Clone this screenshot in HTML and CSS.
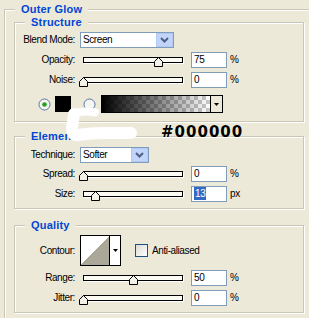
FILE: index.html
```html
<!DOCTYPE html>
<html>
<head>
<meta charset="utf-8">
<title>Outer Glow</title>
<link rel="stylesheet" href="styles.css">
</head>
<body>
<fieldset class="group outer">
  <legend class="title title-outer">Outer Glow</legend>

  <fieldset class="group section structure">
    <legend class="title">Structure</legend>
    <div class="row row-blend">
      <span class="label">Blend Mode:</span>
      <div class="select select-wide">
        <span class="select-value">Screen</span>
        <span class="select-btn"><svg width="17" height="14" viewBox="0 0 17 14"><path d="M5 5 L8.5 8.5 L12 5" fill="none" stroke="#4d6185" stroke-width="2"/></svg></span>
      </div>
    </div>
    <div class="row row-gap">
      <span class="label">Opacity:</span>
      <div class="slider"><div class="track"></div><svg class="thumb" style="left:75%" width="9" height="10" viewBox="0 0 9 10"><polygon points="4.5,0.5 8.5,4.5 8.5,9.5 0.5,9.5 0.5,4.5" fill="#f4f2e8" stroke="#000"/></svg></div>
      <div class="field">75</div><span class="unit">%</span>
    </div>
    <div class="row row-gap-lg">
      <span class="label">Noise:</span>
      <div class="slider"><div class="track"></div><svg class="thumb" style="left:0%" width="9" height="10" viewBox="0 0 9 10"><polygon points="4.5,0.5 8.5,4.5 8.5,9.5 0.5,9.5 0.5,4.5" fill="#f4f2e8" stroke="#000"/></svg></div>
      <div class="field">0</div><span class="unit">%</span>
    </div>
    <div class="color-row">
      <svg class="radio" width="13" height="13" viewBox="0 0 13 13"><circle cx="6.5" cy="6.5" r="5.5" fill="#f6f5ef" stroke="#5676a6"/><circle cx="6.5" cy="6.5" r="2.3" fill="#21a121"/></svg>
      <div class="swatch"></div>
      <svg class="radio radio-2" width="13" height="13" viewBox="0 0 13 13"><circle cx="6.5" cy="6.5" r="5.5" fill="#f6f5ef" stroke="#5676a6"/></svg>
      <div class="gradient">
        <div class="gradient-fill"></div>
        <div class="drop"><svg width="5" height="3" viewBox="0 0 5 3"><polygon points="0,0 5,0 2.5,3" fill="#000"/></svg></div>
      </div>
    </div>
  </fieldset>

  <fieldset class="group section elements">
    <legend class="title">Elements</legend>
    <div class="row row-tech">
      <span class="label">Technique:</span>
      <div class="select select-narrow">
        <span class="select-value">Softer</span>
        <span class="select-btn"><svg width="17" height="14" viewBox="0 0 17 14"><path d="M5 5 L8.5 8.5 L12 5" fill="none" stroke="#4d6185" stroke-width="2"/></svg></span>
      </div>
    </div>
    <div class="row row-gap">
      <span class="label">Spread:</span>
      <div class="slider"><div class="track"></div><svg class="thumb" style="left:0%" width="9" height="10" viewBox="0 0 9 10"><polygon points="4.5,0.5 8.5,4.5 8.5,9.5 0.5,9.5 0.5,4.5" fill="#f4f2e8" stroke="#000"/></svg></div>
      <div class="field">0</div><span class="unit">%</span>
    </div>
    <div class="row">
      <span class="label">Size:</span>
      <div class="slider"><div class="track"></div><svg class="thumb" style="left:11.5%" width="9" height="10" viewBox="0 0 9 10"><polygon points="4.5,0.5 8.5,4.5 8.5,9.5 0.5,9.5 0.5,4.5" fill="#f4f2e8" stroke="#000"/></svg></div>
      <div class="field"><span class="selected">13</span></div><span class="unit">px</span>
    </div>
  </fieldset>

  <fieldset class="group section quality">
    <legend class="title">Quality</legend>
    <div class="row row-contour">
      <span class="label">Contour:</span>
      <div class="contour">
        <div class="contour-preview"></div>
        <div class="contour-drop"><svg width="5" height="3" viewBox="0 0 5 3"><polygon points="0,0 5,0 2.5,3" fill="#000"/></svg></div>
      </div>
      <span class="checkbox"></span>
      <span class="check-label">Anti-aliased</span>
    </div>
    <div class="row row-gap">
      <span class="label">Range:</span>
      <div class="slider"><div class="track"></div><svg class="thumb" style="left:50%" width="9" height="10" viewBox="0 0 9 10"><polygon points="4.5,0.5 8.5,4.5 8.5,9.5 0.5,9.5 0.5,4.5" fill="#f4f2e8" stroke="#000"/></svg></div>
      <div class="field">50</div><span class="unit">%</span>
    </div>
    <div class="row">
      <span class="label">Jitter:</span>
      <div class="slider"><div class="track"></div><svg class="thumb" style="left:0%" width="9" height="10" viewBox="0 0 9 10"><polygon points="4.5,0.5 8.5,4.5 8.5,9.5 0.5,9.5 0.5,4.5" fill="#f4f2e8" stroke="#000"/></svg></div>
      <div class="field">0</div><span class="unit">%</span>
    </div>
  </fieldset>
</fieldset>

<svg class="scribble" width="309" height="318" viewBox="0 0 309 318">
  <path d="M95 112.5 Q 82 110 74 114" fill="none" stroke="#fff" stroke-width="8" stroke-linecap="round" stroke-linejoin="round"/>
  <path d="M74 114 L 72 128 Q 72 136 78 135 Q 90 133 104 133 L 131 133" fill="none" stroke="#fff" stroke-width="12" stroke-linecap="round" stroke-linejoin="round"/>
</svg>
<div class="note">#000000</div>
</body>
</html>
```

FILE: styles.css
```css
* {
  box-sizing: border-box;
}

html,
body {
  margin: 0;
  padding: 0;
  overflow: hidden;
}

body {
  position: relative;
  width: 309px;
  height: 318px;
  background: #ece9d8;
  color: #000;
  font-family: "Liberation Sans", Arial, sans-serif;
  font-size: 10px;
  line-height: 12px;
  letter-spacing: -0.4px;
}

.group {
  margin: 0;
  padding: 0;
  min-width: 0;
  border: 1px solid #c9c6b6;
  box-shadow: inset 1px 1px 0 #fff, 1px 1px 0 #fff;
}

.title {
  margin-left: 10px;
  padding: 0 6px;
  background: #ece9d8;
  color: #0046d5;
  font-family: "Liberation Sans", Arial, sans-serif;
  font-weight: bold;
  font-size: 11px;
  line-height: 13px;
  letter-spacing: 0.2px;
}

.outer {
  margin: 3px 0 0 4px;
  width: 305px;
  padding: 0 0 6px 9px;
  border-right: none;
  border-bottom: none;
  box-shadow: inset 1px 1px 0 #fff;
}

.title-outer {
  margin-left: 1px;
}

.section {
  width: 290px;
}

.structure {
  padding: 3px 0 8px;
}

.elements {
  margin-top: 8px;
  padding: 4px 0 6px;
}

.quality {
  margin-top: 10px;
  padding: 3px 0 6px;
}

.row {
  display: flex;
  align-items: center;
  height: 16px;
}

.row-blend {
  margin-bottom: 4px;
}

.row-gap {
  margin-bottom: 4px;
}

.row-gap-lg {
  margin-bottom: 7px;
}

.row-tech {
  margin-bottom: 3px;
}

.row-contour {
  height: 31px;
  margin-bottom: 4px;
}

.label {
  flex: none;
  width: 60px;
  margin-right: 5px;
  text-align: right;
  white-space: nowrap;
}

.select {
  display: flex;
  height: 16px;
  border: 1px solid #7f9db9;
  background: #fff;
}

.select-wide {
  width: 94px;
}

.select-narrow {
  width: 69px;
}

.select-value {
  flex: 1;
  padding-left: 2px;
  line-height: 14px;
}

.select-btn {
  display: block;
  width: 17px;
  height: 14px;
  background: #c3d4fb;
  box-shadow: inset 0 0 0 1px #b4c8f4;
}

.select-btn svg {
  display: block;
}

.slider {
  position: relative;
  flex: none;
  width: 100px;
  height: 16px;
  margin-left: 3px;
}

.track {
  margin-top: 5px;
  height: 6px;
  border: 1px solid #000;
  background: #fbfbf3;
  box-shadow: 1px 1px 0 #fff;
}

.thumb {
  position: absolute;
  top: 5px;
  margin-left: -4px;
  display: block;
}

.field {
  flex: none;
  width: 36px;
  height: 16px;
  margin-left: 8px;
  padding-left: 2px;
  border: 1px solid #7f9db9;
  background: #fff;
  line-height: 14px;
}

.selected {
  display: inline-block;
  padding: 0 1px;
  background: #316ac5;
  color: #fff;
  line-height: 13px;
}

.unit {
  margin-left: 3px;
}

.color-row {
  display: flex;
  align-items: center;
  height: 18px;
  margin-left: 23px;
}

.radio {
  display: block;
  flex: none;
}

.swatch {
  width: 16px;
  height: 16px;
  margin-left: 4px;
  background: #000;
}

.radio-2 {
  margin-left: 12px;
}

.gradient {
  display: flex;
  width: 122px;
  height: 18px;
  margin-left: 5px;
  border: 1px solid #000;
}

.gradient-fill {
  flex: 1;
  background:
    linear-gradient(to right, #000, rgba(0, 0, 0, 0)),
    repeating-conic-gradient(#c9c9c9 0 25%, #fff 0 50%) 0 0 / 8px 8px;
}

.drop {
  display: flex;
  align-items: center;
  justify-content: center;
  width: 12px;
  border-left: 1px solid #000;
  background: #ece9d8;
}

.drop svg,
.contour-drop svg {
  display: block;
}

.contour {
  display: flex;
  flex: none;
  width: 41px;
  height: 31px;
  border: 1px solid #000;
}

.contour-preview {
  flex: 1;
  background: linear-gradient(to top left, #aca899 50%, #fff 50%);
}

.contour-drop {
  display: flex;
  align-items: center;
  justify-content: center;
  width: 11px;
  border-left: 1px solid #000;
  background: #fff;
}

.checkbox {
  flex: none;
  width: 13px;
  height: 13px;
  margin-left: 14px;
  border: 1px solid #1c5180;
  background: linear-gradient(135deg, #dcdad5, #fff);
}

.check-label {
  margin-left: 4px;
}

.scribble {
  position: absolute;
  left: 0;
  top: 0;
}

.note {
  position: absolute;
  left: 161px;
  top: 125px;
  font-family: "DejaVu Sans", sans-serif;
  font-weight: bold;
  font-size: 15px;
  line-height: 15px;
  letter-spacing: 1px;
}
```
